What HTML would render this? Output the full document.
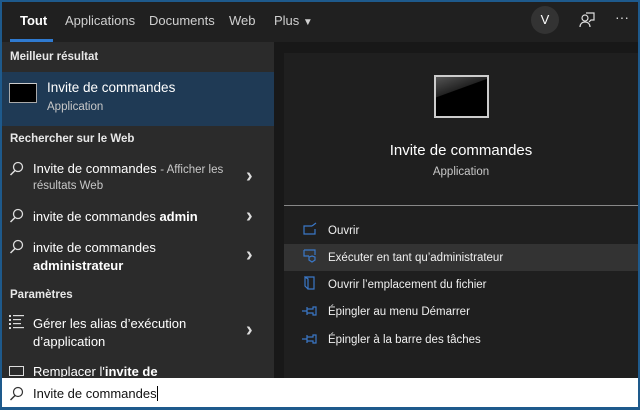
<!DOCTYPE html>
<html><head><meta charset="utf-8"><style>
*{margin:0;padding:0;box-sizing:border-box}
body{width:640px;height:410px;overflow:hidden;background:#1e5a8c;font-family:"Liberation Sans",sans-serif;color:#fff;position:relative}
.a{position:absolute;white-space:nowrap}
#top{left:2px;top:2px;width:636px;height:40px;background:#202020}
#left{left:2px;top:42px;width:272px;height:336px;background:#2b2b2b}
#rightbg{left:274px;top:42px;width:364px;height:336px;background:#181818}
#panel{left:284px;top:53px;width:354px;height:325px;background:#1f1f1f}
.tab{top:13px;font-size:13px;color:#d0d0d0}
.h{font-size:11.5px;font-weight:bold;color:#e8e8e8}
.t{font-size:13px;color:#fff}
.s{font-size:11.5px;color:#c8c8c8}
.chev{font-size:20px;color:#ddd;font-weight:bold;line-height:20px}
.act{font-size:11.5px;color:#f0f0f0}
</style></head><body>
<div class="a" id="top"></div>
<div class="a tab" style="left:20px;color:#fff;font-weight:bold">Tout</div>
<div class="a" style="left:10px;top:39px;width:43px;height:3px;background:#2f7ad0"></div>
<div class="a tab" style="left:65px">Applications</div>
<div class="a tab" style="left:149px">Documents</div>
<div class="a tab" style="left:229px">Web</div>
<div class="a tab" style="left:274px">Plus <span style="font-size:10px">▼</span></div>
<div class="a" style="left:531px;top:6px;width:28px;height:28px;border-radius:50%;background:#333;font-size:13px;text-align:center;line-height:28px">V</div>
<svg class="a" style="left:578px;top:11px" width="18" height="18" viewBox="0 0 18 18" fill="none" stroke="#ddd" stroke-width="1.2"><circle cx="7" cy="7" r="3"/><path d="M2 16c0-3 2-5 5-5s5 2 5 5"/><path d="M8 2h8v7h-3l-2 2"/></svg>
<div class="a" style="left:615px;top:9px;font-size:14px;color:#ddd">···</div>
<div class="a" id="left"></div>
<div class="a" id="rightbg"></div>
<div class="a" id="panel"></div>
<div class="a h" style="left:10px;top:51px">Meilleur résultat</div>
<div class="a" style="left:2px;top:72px;width:272px;height:54px;background:#1f3a55"></div>
<div class="a" style="left:9px;top:83px;width:28px;height:20px;background:#000;border:1px solid #aaa;border-top-color:#ccc"></div>
<div class="a t" style="left:47px;top:80px;font-size:13.5px">Invite de commandes</div>
<div class="a s" style="left:47px;top:101px">Application</div>
<div class="a h" style="left:10px;top:133px">Rechercher sur le Web</div>
<svg width="0" height="0" style="position:absolute"><defs><g id="mg"><circle cx="9" cy="6" r="4.5" fill="none" stroke="#ddd" stroke-width="1.3"/><path d="M6 9.5L1.5 14" stroke="#ddd" stroke-width="1.5"/></g></defs></svg>
<svg class="a" style="left:9px;top:161px" width="16" height="16"><use href="#mg"/></svg>
<div class="a t" style="left:33px;top:161px">Invite de commandes <span class="s">- Afficher les</span></div>
<div class="a s" style="left:33px;top:180px">résultats Web</div>
<div class="a chev" style="left:246px;top:166px">›</div>
<svg class="a" style="left:9px;top:208px" width="16" height="16"><use href="#mg"/></svg>
<div class="a t" style="left:33px;top:209px">invite de commandes <b>admin</b></div>
<div class="a chev" style="left:246px;top:206px">›</div>
<svg class="a" style="left:9px;top:239px" width="16" height="16"><use href="#mg"/></svg>
<div class="a t" style="left:33px;top:240px">invite de commandes</div>
<div class="a t" style="left:33px;top:258px"><b>administrateur</b></div>
<div class="a chev" style="left:246px;top:245px">›</div>
<div class="a h" style="left:10px;top:289px">Paramètres</div>
<svg class="a" style="left:9px;top:315px" width="16" height="14" fill="#ddd"><rect x="0" y="0" width="2" height="2"/><rect x="0" y="4" width="2" height="2"/><rect x="0" y="8" width="2" height="2"/><rect x="0" y="12" width="2" height="2"/><rect x="4" y="0" width="11" height="1.2"/><rect x="4" y="4" width="8" height="1.2"/><rect x="4" y="8" width="8" height="1.2"/><rect x="4" y="12" width="11" height="1.2"/></svg>
<div class="a t" style="left:33px;top:316px">Gérer les alias d’exécution</div>
<div class="a t" style="left:33px;top:334px">d’application</div>
<div class="a chev" style="left:246px;top:320px">›</div>
<div class="a" style="left:9px;top:366px;width:15px;height:10px;border:1.3px solid #ddd"></div>
<div class="a t" style="left:33px;top:364px;height:13px;overflow:hidden">Remplacer l'<b>invite de</b></div>
<div class="a" style="left:434px;top:75px;width:55px;height:43px;background:linear-gradient(160deg,#555 0%,#222 35%,#000 36%);border:2px solid #ccc"></div>
<div class="a" style="left:284px;top:142px;width:354px;text-align:center;font-size:15px">Invite de commandes</div>
<div class="a s" style="left:284px;top:166px;width:354px;text-align:center">Application</div>
<div class="a" style="left:284px;top:205px;width:354px;height:1px;background:#888"></div>
<div class="a" style="left:284px;top:244px;width:354px;height:27px;background:#333"></div>
<svg class="a" style="left:303px;top:222px" width="14" height="14" fill="none" stroke="#3a78c8" stroke-width="1.2"><path d="M9 4H1v8h11V7"/><path d="M9 4l4-3"/></svg>
<div class="a act" style="left:328px;top:225px">Ouvrir</div>
<svg class="a" style="left:303px;top:249px" width="14" height="14" fill="none" stroke="#3a78c8" stroke-width="1.2"><path d="M1 1h11v5M1 1v6h5"/><path d="M9 7l3 1v3l-3 2-3-2V8z"/></svg>
<div class="a act" style="left:328px;top:252px">Exécuter en tant qu’administrateur</div>
<svg class="a" style="left:303px;top:276px" width="14" height="14" fill="none" stroke="#3a78c8" stroke-width="1.2"><path d="M2 1h9v12H5V3L2 1v9l3 3"/></svg>
<div class="a act" style="left:328px;top:279px">Ouvrir l’emplacement du fichier</div>
<svg class="a" style="left:302px;top:306px" width="16" height="10" fill="none" stroke="#3a78c8" stroke-width="1.2"><path d="M0 5h5M5 1v8M5 3h6V1h3v8h-3V7H5"/></svg>
<div class="a act" style="left:328px;top:306px">Épingler au menu Démarrer</div>
<svg class="a" style="left:302px;top:334px" width="16" height="10" fill="none" stroke="#3a78c8" stroke-width="1.2"><path d="M0 5h5M5 1v8M5 3h6V1h3v8h-3V7H5"/></svg>
<div class="a act" style="left:328px;top:334px">Épingler à la barre des tâches</div>
<div class="a" style="left:2px;top:378px;width:636px;height:29px;background:#fff"></div>
<svg class="a" style="left:9px;top:386px" width="16" height="16"><circle cx="9" cy="6" r="4.5" fill="none" stroke="#333" stroke-width="1.2"/><path d="M6 9.5L1.5 14" stroke="#333" stroke-width="1.4"/></svg>
<div class="a" style="left:33px;top:386px;font-size:13px;color:#111">Invite de commandes<span style="display:inline-block;width:1px;height:15px;background:#000;vertical-align:-3px"></span></div>
</body></html>
